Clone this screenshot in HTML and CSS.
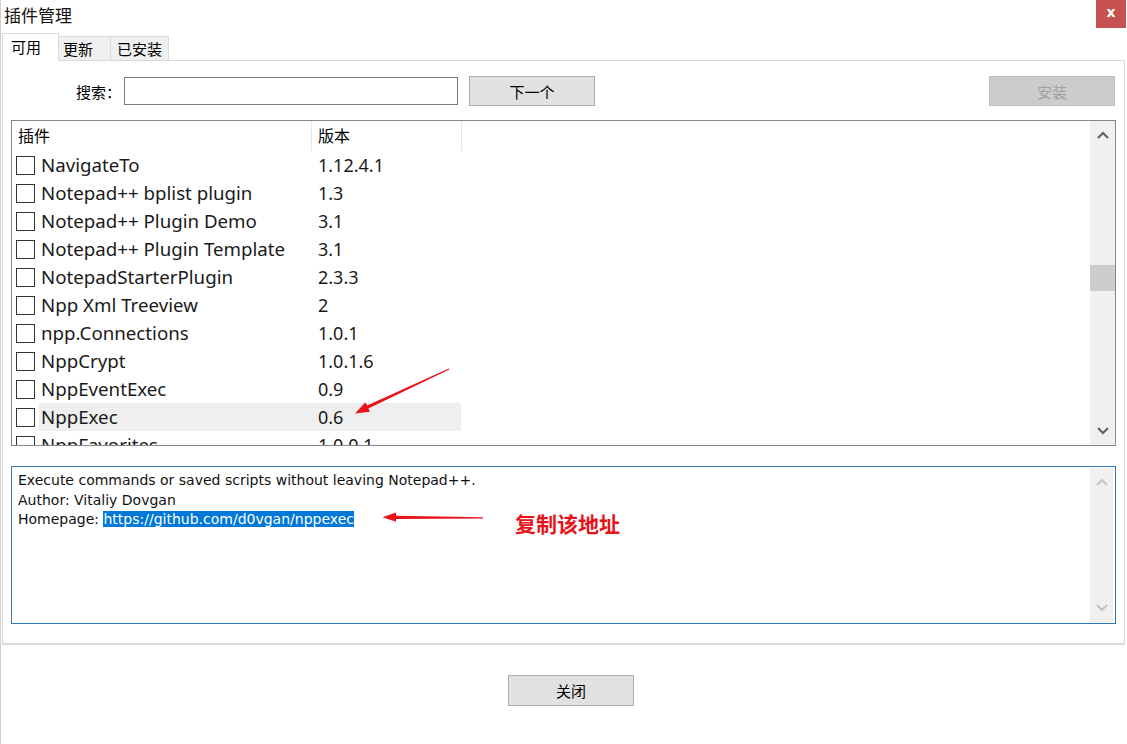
FILE: index.html
```html
<!DOCTYPE html>
<html lang="zh-CN">

<head>
	<meta charset="utf-8" />
	<title>插件管理</title>
	<link rel="stylesheet" href="styles.css">
</head>

<body>
	<div class="titlebar">
		<span class="title">插件管理</span>
		<button class="closex">x</button>
	</div>

	<div class="tabs">
		<div class="tab active">可用</div>
		<div class="tab">更新</div>
		<div class="tab">已安装</div>
	</div>

	<div class="panel">
		<div class="searchrow">
			<label class="searchlabel">搜索：</label>
			<input class="searchbox" type="text">
			<button class="btn next">下一个</button>
			<button class="btn install" disabled>安装</button>
		</div>

		<div class="list">
			<div class="listmain">
				<div class="head">
					<div class="hname">插件</div>
					<div class="hver">版本</div>
				</div>
				<div class="row"><span class="check"></span><div class="item"><span class="name">NavigateTo</span><span class="ver">1.12.4.1</span></div></div>
				<div class="row"><span class="check"></span><div class="item"><span class="name">Notepad++ bplist plugin</span><span class="ver">1.3</span></div></div>
				<div class="row"><span class="check"></span><div class="item"><span class="name">Notepad++ Plugin Demo</span><span class="ver">3.1</span></div></div>
				<div class="row"><span class="check"></span><div class="item"><span class="name">Notepad++ Plugin Template</span><span class="ver">3.1</span></div></div>
				<div class="row"><span class="check"></span><div class="item"><span class="name">NotepadStarterPlugin</span><span class="ver">2.3.3</span></div></div>
				<div class="row"><span class="check"></span><div class="item"><span class="name">Npp Xml Treeview</span><span class="ver">2</span></div></div>
				<div class="row"><span class="check"></span><div class="item"><span class="name">npp.Connections</span><span class="ver">1.0.1</span></div></div>
				<div class="row"><span class="check"></span><div class="item"><span class="name">NppCrypt</span><span class="ver">1.0.1.6</span></div></div>
				<div class="row"><span class="check"></span><div class="item"><span class="name">NppEventExec</span><span class="ver">0.9</span></div></div>
				<div class="row"><span class="check"></span><div class="item selected"><span class="name">NppExec</span><span class="ver">0.6</span></div></div>
				<div class="row"><span class="check"></span><div class="item"><span class="name">NppFavorites</span><span class="ver">1.0.0.1</span></div></div>
			</div>
			<div class="vscroll">
				<div class="sbbtn">
					<svg width="12" height="8" viewBox="0 0 12 8"><polyline points="1 7, 6 2, 11 7" /></svg>
				</div>
				<div class="sbtrack"><div class="thumb"></div></div>
				<div class="sbbtn">
					<svg width="12" height="8" viewBox="0 0 12 8"><polyline points="1 1, 6 6, 11 1" /></svg>
				</div>
			</div>
		</div>

		<div class="desc">
			<div class="desctext">
				Execute commands or saved scripts without leaving Notepad++.<br>
				Author: Vitaliy Dovgan<br>
				Homepage: <span class="sel">https://github.com/d0vgan/nppexec</span>
			</div>
			<div class="vscroll off">
				<div class="sbbtn">
					<svg width="12" height="8" viewBox="0 0 12 8"><polyline points="1 7, 6 2, 11 7" /></svg>
				</div>
				<div class="sbtrack"></div>
				<div class="sbbtn">
					<svg width="12" height="8" viewBox="0 0 12 8"><polyline points="1 1, 6 6, 11 1" /></svg>
				</div>
			</div>
		</div>
	</div>

	<div class="footer">
		<button class="btn closebtn">关闭</button>
	</div>

	<!-- red markup drawn on top of the dialog -->
	<svg class="marks" width="1127" height="744" viewBox="0 0 1127 744">
		<polygon points="447.8 368.4, 366.1 405.6, 364.4 402.2, 354 413.5, 369 411.8, 367.3 408.4, 448.3 369.6"></polygon>
		<polygon points="482 517.2, 395 515.8, 395 512.5, 381.5 517.3, 395 521.8, 395 519, 482 518.6"></polygon>
	</svg>
	<div class="note">复制该地址</div>
</body>

</html>
```

FILE: styles.css
```css
body {
	margin: 0;
	width: 1127px;
	height: 744px;
	overflow: hidden;
	position: relative;
	background: #fff;
	font-family: "Noto Sans", "Noto Sans CJK SC", sans-serif;
	color: #000;
	border-left: 1px solid #d0d0d0;
	box-sizing: border-box;
}

.titlebar {
	height: 28px;
	display: flex;
	align-items: center;
}

.title {
	font-family: "Noto Sans CJK SC", sans-serif;
	font-size: 17px;
	padding-left: 3px;
	color: #111;
}

.closex {
	margin-left: auto;
	margin-right: 1px;
	width: 30px;
	height: 28px;
	border: none;
	background: #c75050;
	color: #fff;
	font-family: "DejaVu Sans", sans-serif;
	font-weight: bold;
	font-size: 14px;
	padding: 0 0 4px;
}

.tabs {
	display: flex;
	align-items: flex-end;
	height: 27px;
	margin-top: 5px;
	padding-left: 1px;
	position: relative;
	z-index: 1;
}

.tab {
	font-family: "Noto Sans CJK SC", sans-serif;
	font-size: 15px;
	height: 24px;
	line-height: 23px;
	box-sizing: border-box;
	border: 1px solid #d9d9d9;
	border-bottom: none;
	background: #f0f0f0;
	padding-left: 4px;
	margin-left: -1px;
	width: 53px;
}

.tab:last-child {
	width: 59px;
	padding-left: 6px;
}

.tab.active {
	height: 28px;
	line-height: 26px;
	margin-bottom: -1px;
	background: #fff;
	width: 57px;
	padding-left: 8px;
	margin-left: 0;
}

.panel {
	margin: 0 2px 0 1px;
	height: 585px;
	box-sizing: border-box;
	border: 1px solid #d9d9d9;
	border-bottom-width: 2px;
}

.searchrow {
	display: flex;
	align-items: center;
	margin-top: 15px;
	height: 30px;
	padding-left: 73px;
	padding-right: 9px;
}

.searchlabel {
	font-family: "Noto Sans CJK SC", sans-serif;
	font-size: 15px;
	width: 48px;
}

.searchbox {
	width: 334px;
	height: 28px;
	box-sizing: border-box;
	border: 1px solid #7a7a7a;
	margin: 0 11px 0 0;
	padding: 0;
}

.btn {
	font-family: "Noto Sans CJK SC", sans-serif;
	font-size: 15px;
	width: 126px;
	height: 30px;
	background: #e1e1e1;
	border: 1px solid #adadad;
	color: #000;
	padding: 0;
}

.install {
	margin-left: auto;
	background: #cccccc;
	border-color: #bfbfbf;
	color: #a0a0a0;
}

.list {
	display: flex;
	margin: 14px 8px 0 8px;
	height: 326px;
	box-sizing: border-box;
	border: 1px solid #828790;
	overflow: hidden;
}

.listmain {
	flex: 1;
	overflow: hidden;
}

.head {
	display: flex;
	height: 30px;
	font-family: "Noto Sans CJK SC", sans-serif;
	font-size: 16px;
	line-height: 29px;
}

.hname {
	width: 293px;
	padding-left: 6px;
	border-right: 1px solid #e5e5e5;
}

.hver {
	width: 143px;
	padding-left: 6px;
	border-right: 1px solid #e5e5e5;
}

.row {
	display: flex;
	align-items: center;
	height: 28px;
	font-size: 18.7px;
	color: #1a1a1a;
}

.check {
	width: 19px;
	height: 19px;
	box-sizing: border-box;
	border: 1px solid #333;
	margin: 0 4px 0 4px;
}

.item {
	display: flex;
	align-items: baseline;
	height: 28px;
	line-height: 27px;
	width: 422px;
}

.item.selected {
	background: #efefef;
}

.name {
	width: 270px;
	padding-left: 2px;
	white-space: nowrap;
}

.ver {
	padding-left: 7px;
	font-size: 18px;
}

.vscroll {
	width: 25px;
	background: #f0f0f0;
	display: flex;
	flex-direction: column;
}

.sbbtn {
	height: 28px;
	display: flex;
	align-items: center;
	justify-content: center;
}

.sbbtn svg polyline {
	fill: none;
	stroke: #606060;
	stroke-width: 2;
}

.sbtrack {
	flex: 1;
}

.thumb {
	margin: 116px 0 0 0;
	height: 26px;
	background: #cdcdcd;
}

.desc {
	display: flex;
	margin: 20px 8px 0 8px;
	height: 158px;
	box-sizing: border-box;
	border: 1px solid #2f78b0;
}

.desctext {
	flex: 1;
	padding: 4px 6px;
	font-family: "DejaVu Sans", sans-serif;
	font-size: 14px;
	line-height: 19.5px;
	color: #111;
}

.sel {
	background: #0078d7;
	color: #fff;
}

.vscroll.off {
	width: 23px;
	margin: 1px 2px 1px 0;
}

.vscroll.off .sbbtn svg polyline {
	stroke: #c4c4c4;
}

.footer {
	padding: 30px 0 0 507px;
}

.closebtn {
	height: 31px;
}

.marks {
	position: absolute;
	left: 0;
	top: 0;
	pointer-events: none;
}

.marks polygon {
	fill: #e8121b;
}

.note {
	position: absolute;
	left: 514px;
	top: 508px;
	font-family: "Noto Sans CJK SC", sans-serif;
	font-weight: bold;
	font-size: 21px;
	color: #e8121b;
}
```
